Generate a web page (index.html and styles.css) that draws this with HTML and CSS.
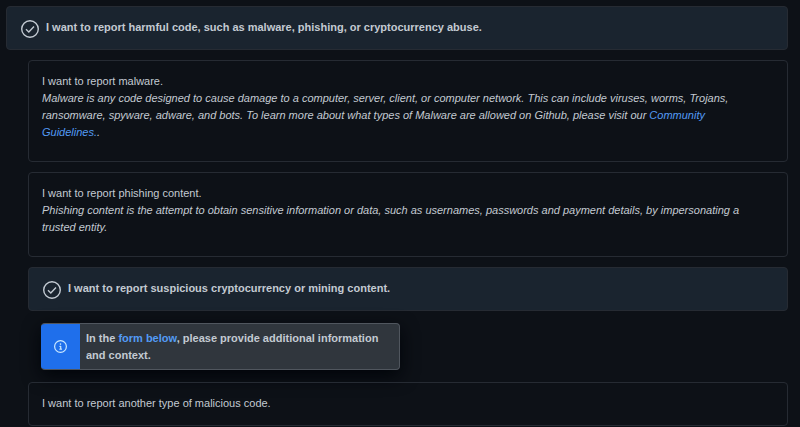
FILE: index.html
```
<!DOCTYPE html>
<html lang="en">
<head>
    <meta charset="UTF-8">
    <meta name="viewport" content="width=device-width, initial-scale=1.0">
    <title>Report abuse</title>
    <link rel="stylesheet" href="styles.css">
</head>
<body>
    <form class="report">
        <label class="option">
            <input type="radio" name="category" value="harmful" checked>
            <svg class="check" viewBox="0 0 20 20">
                <circle cx="10" cy="10" r="8.3"/>
                <path d="M6 10.3l2.8 2.6 5.2-5.4"/>
            </svg>
            <span class="title">I want to report harmful code, such as malware, phishing, or cryptocurrency abuse.</span>
        </label>

        <div class="sub-options">
            <label class="option detailed">
                <input type="radio" name="type" value="malware">
                <span class="text">I want to report malware.<br>
                    <em>Malware is any code designed to cause damage to a computer, server, client, or computer network. This can include viruses, worms, Trojans, ransomware, spyware, adware, and bots. To learn more about what types of Malware are allowed on Github, please visit our <a href="#guidelines">Community Guidelines.</a>.</em>
                </span>
            </label>

            <label class="option detailed">
                <input type="radio" name="type" value="phishing">
                <span class="text">I want to report phishing content.<br>
                    <em>Phishing content is the attempt to obtain sensitive information or data, such as usernames, passwords and payment details, by impersonating a trusted entity.</em>
                </span>
            </label>

            <label class="option">
                <input type="radio" name="type" value="crypto" checked>
                <svg class="check" viewBox="0 0 20 20">
                    <circle cx="10" cy="10" r="8.3"/>
                    <path d="M6 10.3l2.8 2.6 5.2-5.4"/>
                </svg>
                <span class="title">I want to report suspicious cryptocurrency or mining content.</span>
            </label>

            <div class="toast">
                <span class="toast-icon">
                    <svg viewBox="0 0 16 16">
                        <path d="M8 1.5a6.5 6.5 0 100 13 6.5 6.5 0 000-13zM0 8a8 8 0 1116 0A8 8 0 010 8zm6.5-.25A.75.75 0 017.25 7h1a.75.75 0 01.75.75v2.75h.25a.75.75 0 010 1.5h-2a.75.75 0 010-1.5h.25v-2h-.25a.75.75 0 01-.75-.75zM8 6a1 1 0 100-2 1 1 0 000 2z"/>
                    </svg>
                </span>
                <p class="toast-text">In the <a href="#form">form below</a>, please provide additional information and context.</p>
            </div>

            <label class="option">
                <input type="radio" name="type" value="other">
                <span class="text">I want to report another type of malicious code.</span>
            </label>
        </div>
    </form>
</body>
</html>
```
FILE: styles.css
```
body {
    margin: 0;
    background-color: #0d1117;
    color: #c3cad2;
    font-family: "Liberation Sans", Arial, sans-serif;
    font-size: 11px;
    line-height: 17px;
}
a {
    color: #539bf5;
    text-decoration: none;
}
.report {
    padding: 6px 12px 0 6px;
}
.sub-options {
    margin-left: 22px;
}
.option {
    display: flex;
    box-sizing: border-box;
    min-height: 44px;
    margin-bottom: 10px;
    padding: 12px 13px;
    border: 1px solid #262b33;
    border-radius: 4px;
    cursor: pointer;
}
.option:has(input:checked) {
    padding: 12px 13px 10px;
    background-color: #1a242f;
}
.option.detailed {
    padding-right: 32px;
    padding-bottom: 20px;
}
/* the card itself shows the state */
.option input {
    appearance: none;
    width: 0;
    height: 0;
    margin: 0;
}
.check {
    flex: none;
    width: 20px;
    height: 20px;
    margin-right: 6px;
    fill: none;
    stroke: #c3cad2;
    stroke-width: 1.4;
}
.title {
    font-weight: bold;
}
.toast {
    display: flex;
    box-sizing: border-box;
    width: 359px;
    max-width: 100%;
    margin: 12px 13px;
    border: 1px solid #50565e;
    border-left: 0;
    border-radius: 4px;
    background-color: #30363d;
    box-shadow: 0 6px 18px #010409;
    overflow: hidden;
}
.toast-icon {
    display: flex;
    flex: none;
    align-items: center;
    justify-content: center;
    width: 39px;
    background-color: #1f6feb;
}
.toast-icon svg {
    width: 13px;
    height: 13px;
    fill: #cae8ff;
}
.toast-text {
    margin: 0;
    padding: 6px 6px 5px;
    font-weight: bold;
}
```
